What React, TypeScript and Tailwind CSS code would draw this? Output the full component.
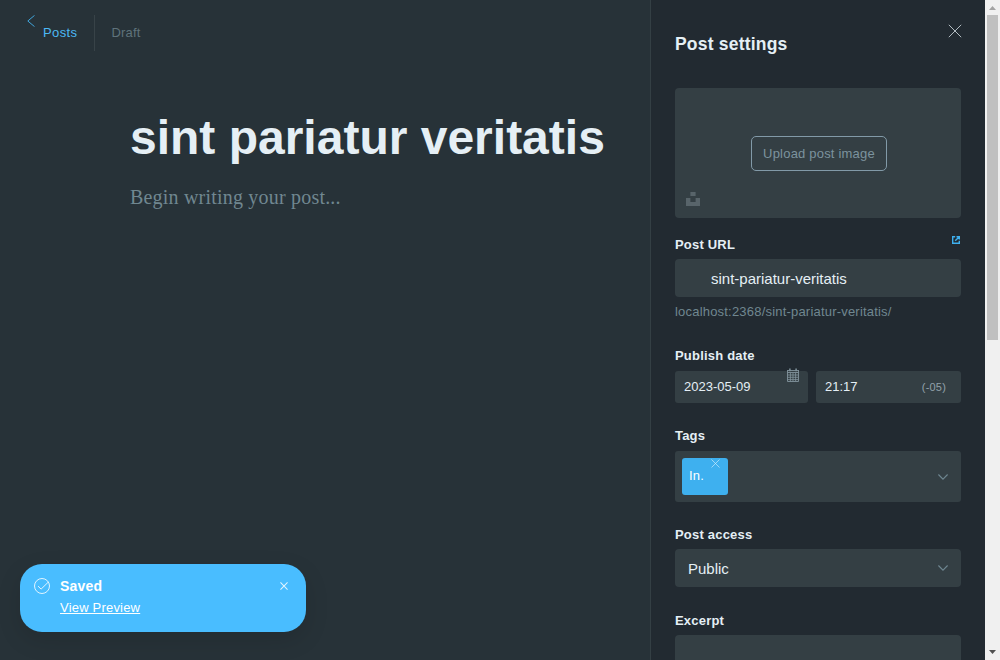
import type { ReactNode } from 'react';

function Cross({ className }: { className: string }) {
  return (
    <svg viewBox="0 0 14 14" fill="none" stroke="currentColor" className={className}>
      <path d="M.8.8l12.4 12.4M13.2.8L.8 13.2" />
    </svg>
  );
}

function Chevron({ className }: { className: string }) {
  return (
    <svg viewBox="0 0 10 6" fill="none" stroke="currentColor" strokeWidth="1.1" className={className}>
      <path d="M.4.5L5 5.2 9.6.5" />
    </svg>
  );
}

function CalendarIcon() {
  return (
    <svg viewBox="0 0 12 14" fill="none" stroke="currentColor" className="absolute left-[112px] -top-[3px] h-[14px] w-[12px] text-[#82949d]">
      <path d="M.5 2v11.5h11V2M.5 2.5h11M.5 4.5h11" strokeWidth="0.9" />
      <path d="M1 7h10M1 9.3h10M1 11.6h10M3.4 5v8M6 5v8M8.6 5v8" strokeWidth="0.8" />
      <path d="M2.9.4v2.8M9.1.4v2.8" strokeWidth="1.5" />
    </svg>
  );
}

function Label({ children }: { children: ReactNode }) {
  return <div className="h-[15px] text-[13px] font-bold leading-[15px] tracking-[0.2px]">{children}</div>;
}

function Editor() {
  return (
    <main className="flex h-full w-[650px] flex-col bg-[#273238]">
      <header className="flex h-[66px] items-start pl-[27px] pt-[15px] text-[13px] tracking-[0.2px]">
        <svg viewBox="0 0 8 12" fill="none" stroke="#44b2ed" strokeWidth="0.9" className="h-3 w-2">
          <path d="M7.5.4L.8 6l6.7 5.6" />
        </svg>
        <a className="ml-2 w-[51px] leading-[35px] tracking-[0.4px] text-[#4cb9f5]">Posts</a>
        <div className="h-9 w-px bg-[#384348]" />
        <span className="ml-[16.5px] leading-[35px] text-[#5f727b]">Draft</span>
      </header>
      <section className="pl-[130px] pt-[44px]">
        <h1 className="whitespace-nowrap text-[48px] font-bold leading-[55px] text-[#e5eff5]">sint pariatur veritatis</h1>
        <p className="mt-[19px] font-['Liberation_Serif',serif] text-[20px] leading-[26px] tracking-[0.2px] text-[#708790]">Begin writing your post...</p>
      </section>
    </main>
  );
}

function Settings() {
  return (
    <aside className="flex h-full w-[335px] flex-col border-l border-[#343f44] bg-[#222a31] px-6 text-[#e5eff5]">
      <header className="flex h-[88px] justify-between">
        <h2 className="pt-[33px] text-[17.5px] font-bold leading-[22px] tracking-[0.2px]">Post settings</h2>
        <Cross className="-mr-px mt-[24px] size-[14px] text-[#b3bdc2]" />
      </header>

      <div className="relative flex h-[130px] shrink-0 justify-center rounded bg-[#343f44] pt-12">
        <button className="ml-[2px] h-[35px] w-[136px] rounded-[5px] border border-[#829aa8] text-[13px] tracking-[0.2px] text-[#7c939e]">Upload post image</button>
        <svg viewBox="0 0 14 14" fill="#58646a" className="absolute bottom-3 left-[11px] size-[14px]">
          <path d="M4.4 0h5.2v4H4.4zM0 6h4.4v4h5.2V6H14v8H0z" />
        </svg>
      </div>

      <div className="mt-[19px] flex h-[22px] shrink-0 justify-between">
        <Label>Post URL</Label>
        <svg viewBox="0 0 8 8" fill="none" stroke="#3eb0ef" strokeWidth="1.4" className="mr-px -mt-px size-2">
          <path d="M3.2.7H.7v6.6h6.6V4.8M3.2 4.8L6.8 1.2M4.5.7h2.8v2.8" />
        </svg>
      </div>
      <div className="h-[38px] shrink-0 rounded bg-[#343f44] pl-9 text-[15px] leading-[39px]">sint-pariatur-veritatis</div>
      <p className="mt-[7px] h-[15px] text-[13px] leading-[15px] tracking-[0.2px] text-[#708790]">localhost:2368/sint-pariatur-veritatis/</p>

      <div className="mt-[29px]"><Label>Publish date</Label></div>
      <div className="mt-[8px] flex h-8 shrink-0 gap-2 text-[13px] leading-[31px]">
        <div className="relative w-[133px] rounded-[3px] bg-[#343f44] pl-[9px]">2023-05-09<CalendarIcon /></div>
        <div className="flex w-[145px] justify-between rounded-[3px] bg-[#343f44] pl-[9px] pr-[15px]">
          <span>21:17</span>
          <span className="text-[11px] leading-[33px] tracking-[0.2px] text-[#92a1aa]">(-05)</span>
        </div>
      </div>

      <div className="mt-[25px]"><Label>Tags</Label></div>
      <div className="mt-[8px] flex h-[51px] shrink-0 items-center justify-between rounded-[3px] bg-[#343f44] pl-[7px] pr-[12.6px]">
        <div className="flex h-[37px] w-[46px] justify-between rounded-[3px] bg-[#3eb0ef] pl-[7px] pr-2 text-[13px] leading-[36px] tracking-[0.2px] text-white">
          In.
          <Cross className="mt-px size-[9px] text-[#d4effe]" />
        </div>
        <Chevron className="h-[6px] w-[10px] text-[#6f8791]" />
      </div>

      <div className="mt-[25px]"><Label>Post access</Label></div>
      <div className="mt-[7px] flex h-[38px] shrink-0 items-center justify-between rounded bg-[#343f44] pl-[13px] pr-[13px] text-[15px] leading-[38px]">
        <span className="pt-[2px]">Public</span>
        <Chevron className="h-[6px] w-[10px] text-[#6f8791]" />
      </div>

      <div className="mt-[26px]"><Label>Excerpt</Label></div>
      <div className="mt-[7px] h-[25px] shrink-0 rounded-t bg-[#343f44]" />
    </aside>
  );
}

function Scrollbar() {
  return (
    <div className="flex h-full w-[15px] flex-col items-center bg-[#f0f0f0]">
      <svg viewBox="0 0 15 15" className="size-[15px]"><path fill="#a3a3a3" d="M4 10l3.5-4L11 10z" /></svg>
      <div className="h-[325px] w-[11px] bg-[#c0c0c0]" />
      <svg viewBox="0 0 15 15" className="mt-auto size-[15px]"><path fill="#505050" d="M4 5h7L7.5 9z" /></svg>
    </div>
  );
}

function Toast() {
  return (
    <div className="absolute left-5 top-[564px] flex h-[68px] w-[286px] rounded-[22px] bg-[#49bdff] pl-[14px] pt-[14px] text-white shadow-[0_8px_24px_rgba(0,0,0,0.12)]">
      <svg viewBox="0 0 16 16" fill="none" stroke="#e0f4ff" className="size-4">
        <circle cx="8" cy="8" r="7.5" />
        <path d="M4 8.1l3.1 3 7.2-7" />
      </svg>
      <div className="ml-[10px] w-[220px]">
        <div className="text-[14px] font-bold leading-4 tracking-[0.2px]">Saved</div>
        <a className="mt-[5px] block text-[13px] leading-[17px] tracking-[0.2px] underline">View Preview</a>
      </div>
      <Cross className="mt-[4px] size-2 text-[#e0f4ff] [stroke-width:1.8]" />
    </div>
  );
}

export default function App() {
  return (
    <div className="relative flex h-[660px] w-[1000px] overflow-hidden font-['Liberation_Sans',Arial,sans-serif]">
      <Editor />
      <Settings />
      <Scrollbar />
      <Toast />
    </div>
  );
}
